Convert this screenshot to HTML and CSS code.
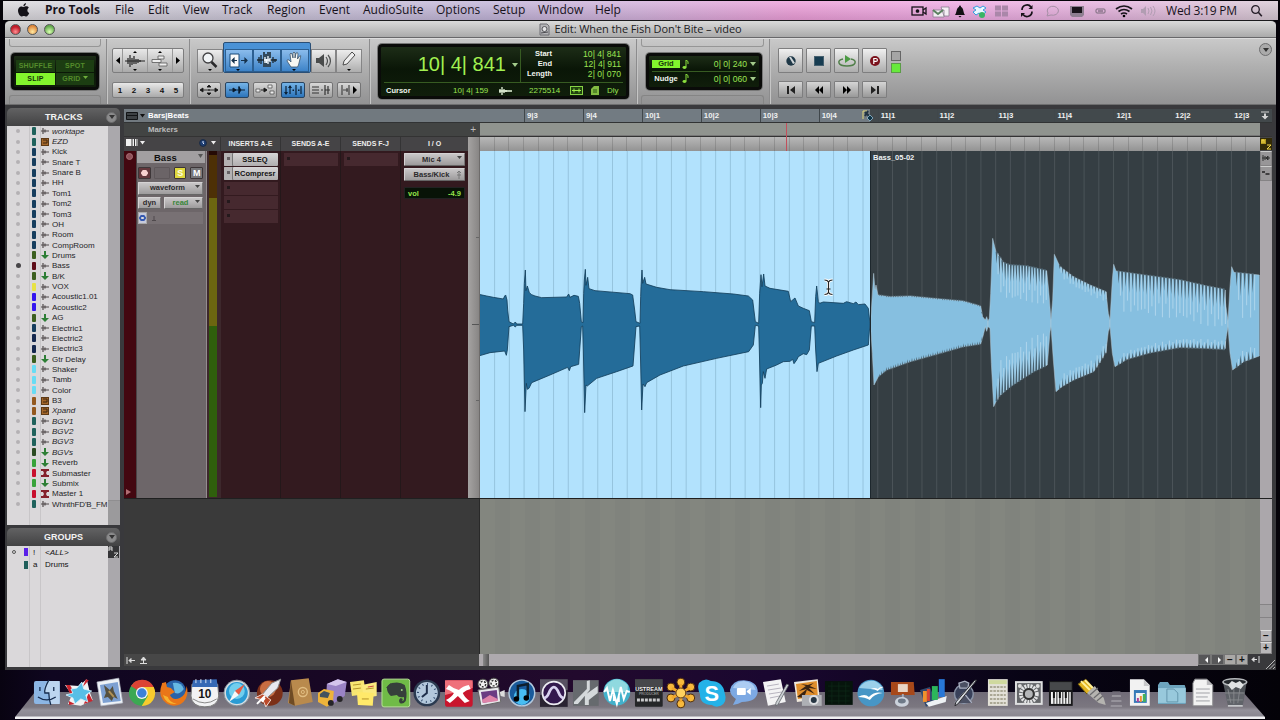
FILE: index.html
```html
<!DOCTYPE html>
<html lang="en">
<head>
<meta charset="utf-8">
<title>Edit: When the Fish Don't Bite – video</title>
<link rel="stylesheet" href="styles.css">
</head>
<body>
<header class="menubar">
  <nav class="menus">
    <span class="apple"><svg width="13" height="14" viewBox="0 0 13 14"><path d="M9 0C9 2 7.8 3.2 6.4 3.2 6.3 1.6 7.6.3 9 0zM6.500 4C7.500 4 8.200 3.300 9.300 3.300c1 0 2 .5 2.500 1.400C9.800 6 10 9 12.200 9.900 11.700 11.500 10.400 13.400 9.200 13.400 8.300 13.400 7.900 12.900 6.800 12.900S5.300 13.400 4.500 13.400C2.800 13.400 1 10.200 1 7.600 1 5 2.600 3.400 4.300 3.400 5.200 3.400 5.900 4 6.500 4z" fill="#141218"/></svg></span>
    <b>Pro Tools</b><span>File</span><span>Edit</span><span>View</span><span>Track</span><span>Region</span><span>Event</span><span>AudioSuite</span><span>Options</span><span>Setup</span><span>Window</span><span>Help</span>
  </nav>
  <div class="tray">
    <svg width="268" height="18" viewBox="0 0 268 18">
      <g fill="none" stroke="#17121a" stroke-width="1.3"><rect x="1" y="5" width="11" height="8"/><path d="M12 8l3-2v6l-3-2"/><circle cx="6.500" cy="9" r="1.200" fill="#17121a"/></g>
      <path d="M22 8h11v7H22zM30 5h8v9h-5z" fill="#f4eef4" stroke="#8b7d90" stroke-width=".8"/><path d="M22 8l5 4 5-4" fill="none" stroke="#5c8260" stroke-width="2"/>
      <path d="M44 13c2-2 1-7 4-8 0-2 2-2 2 0 3 1 2 6 4 8zM47.500 14h3l-1.500 1.500z" fill="#121014"/>
      <path d="M62 6l4-2 3 2 3-2 3 2-3 2 3 2-4 3-3-2-3 2-3-3 3-2z" fill="#eaf8ff" stroke="#359dde"/><circle cx="71" cy="13" r="3" fill="#37b464"/>
      <path d="M84 3.500h6v5h-6zM91 3.500h6v5h-6zM84 9.500h6v5h-6zM91 9.500h6v5h-6z" fill="#aa87a9"/>
      <path d="M111 8a5 5 0 0 1 9-3M121 9.500a5 5 0 0 1-9 3" fill="none" stroke="#171219" stroke-width="1.700"/><path d="M121.500 3v4h-4zM110 15v-4h4z" fill="#171219"/>
      <path d="M136 14l1-3a5.600 4.500 0 1 1 3 2z" fill="none" stroke="#a68fa6"/>
      <path d="M159 4h14v9l-2 2h-10l-2-2z" fill="#8e7f91"/><rect x="161" y="5" width="10" height="6" fill="#19141b"/>
      <rect x="185" y="7" width="9" height="4" rx="1" fill="none" stroke="#796b7b"/><path d="M187 9h5" stroke="#635566"/>
      <g fill="none" stroke="#19141b" stroke-width="1.700"><path d="M205 7q8-6 16 0M207.500 9.500q5.500-4 11 0M210 12q3-2 6 0"/></g><circle cx="213" cy="14" r="1.300"/>
      <path d="M230 7h2l3-3v10l-3-3h-2z" fill="#b19db2"/><path d="M237 6q2 3 0 6M239.500 5q3 4 0 8M242 4q4 5 0 10" fill="none" stroke="#b19db2"/>
    </svg>
    <span class="time">Wed 3:19 PM</span>
    <svg width="13" height="14" viewBox="0 0 13 14"><circle cx="5.500" cy="5.500" r="3.800" fill="none" stroke="#241d27" stroke-width="1.300"/><path d="M8.300 8.300l3.500 4" stroke="#241d27" stroke-width="1.600"/></svg>
  </div>
</header>

<main class="window">
  <div class="titlebar">
    <div class="lights"><i class="red"></i><i class="amber"></i><i class="green"></i></div>
    <svg width="11" height="13" viewBox="0 0 11 13"><path d="M1 1h7l2 2v9H1z" fill="#b5b5b8" stroke="#6d6d72"/><circle cx="5.500" cy="6" r="2.500" fill="#e4e4e6" stroke="#55555a"/><path d="M2 10l7-1" stroke="#4a4a50"/></svg>
    <span>Edit: When the Fish Don't Bite – video</span>
  </div>

  <div class="toolbar">
    <section class="modes">
      <div class="lcd modegrid"><span>SHUFFLE</span><span>SPOT</span><span class="lit">SLIP</span><span>GRID&nbsp;<svg width="5" height="3"><path d="M0 0h5L2.500 3z" fill="#6fae3c"/></svg></span></div>
    </section>
    <section class="zoomers">
      <div class="strip big">
        <i class="w10"><svg width="6" height="7"><path d="M5 0v7L1 3.500z"/></svg></i>
        <i class="w26"><svg width="22" height="20" viewBox="0 0 22 20"><path d="M1 10h20M4 7v6M6 4v12M8 7v7M10 5v8M12 8v5M14 8v4M16 9v2" stroke="#222" stroke-width="1.200"/><path d="M9 2l2-2 2 2zM9 18l2 2 2-2z"/></svg></i>
        <i class="w26"><svg width="20" height="20" viewBox="0 0 20 20"><path d="M8 5h6v3H8zM2 8.500h9v3H2zM9 12h8v3H9z" fill="#eee" stroke="#666" stroke-width=".9"/><path d="M8 2l2-2 2 2zM8 18l2 2 2-2z"/></svg></i>
        <i class="w10"><svg width="6" height="7"><path d="M1 0v7L5 3.500z"/></svg></i>
      </div>
      <div class="strip small nums"><i>1</i><i>2</i><i>3</i><i>4</i><i>5</i></div>
    </section>
    <section class="tools">
      <div class="toolrow">
        <i><svg width="22" height="22" viewBox="0 0 22 22"><circle cx="9" cy="8" r="5" fill="#f1f4f6" stroke="#424244" stroke-width="1.300"/><path d="M12.500 12l5 5" stroke="#29292b" stroke-width="2.500"/><path d="M9 19h4l-2 2z"/></svg></i>
        <div class="smart">
          <i><svg width="24" height="22" viewBox="0 0 24 22"><path d="M3 4h9v13H3z" fill="#fafafa" stroke="#184976"/><path d="M5 10.500h5M5 10.500l2-2v4zM14 10.500h6M20 10.500l-2-2v4z" stroke="#15314c" fill="#15314c" stroke-width="1.200"/><path d="M9 19h4l-2 2z"/></svg></i>
          <i><svg width="24" height="22" viewBox="0 0 24 22"><path d="M8 2h2v2h2V2h4v15H8z" fill="#34495a"/><path d="M2 10h20M4 7v6M6 5v9M18 7v6M20 9v3" stroke="#1b2730" stroke-width="1.300"/><path d="M9 10h6M10 7v6M11.500 9v4M13 6v8M15 8v4" stroke="#f4faff" stroke-width="1.300"/></svg></i>
          <i><svg width="22" height="22" viewBox="0 0 22 22"><path d="M7 17L3 11q0-2 2-1l2 2-1-8q1-2 2 0l1 4V3q1-2 2 0v5l1-5q2-1 2 1l-.5 5 2-3q2-1 1 1l-2 8-1 2z" fill="#f6f6f2" stroke="#3b536a" stroke-width=".8"/><path d="M8 19h4l-2 2z"/></svg></i>
        </div>
        <i><svg width="20" height="20" viewBox="0 0 20 20"><path d="M2 7h3l5-4v13l-5-4H2z" fill="#4a4c4c"/><path d="M12 6q3 4 0 8M14 4q5 6 0 12" stroke="#505252" fill="none" stroke-width="1.200"/></svg></i>
        <i><svg width="20" height="22" viewBox="0 0 20 22"><path d="M4 15l1-4 8-9 3 3-8 9z" fill="#eee" stroke="#4c4c4c"/><path d="M8 19h4l-2 2z"/></svg></i>
      </div>
      <div class="editrow">
        <i><svg width="20" height="12" viewBox="0 0 20 12"><path d="M1 6h18M1 6l3-2v4zM19 6l-3-2v4z" stroke="#222" stroke-width=".9"/><path d="M10 1l2 2H8zM10 11l2-2H8zM9 6h2" stroke="#222"/></svg></i>
        <i class="on"><svg width="20" height="12" viewBox="0 0 20 12"><path d="M2 6h16M9 6L6 4v4zM14 6l-2-3v6zM12 2v8" stroke="#0b2036"/></svg></i>
        <i><svg width="20" height="12" viewBox="0 0 20 12"><path d="M1 5h4v3H1zM13 1h4v3h-4zM15 7h4v3h-4z" fill="#eee" stroke="#555" stroke-width=".8"/><path d="M6 6h6M12 6L9 4v4z" stroke="#222"/></svg></i>
        <i class="on"><svg width="20" height="12" viewBox="0 0 20 12"><path d="M3 2v8M7 2v8M13 1v10M18 2v8" stroke="#0b2036" stroke-width="1.200"/><path d="M1 8h4l-2 3zM5 4h4L7 1zM9.500 5.500h1.500v1.500H9.500zM15 5.500h1.500v1.500H15z" fill="#0b2036"/></svg></i>
        <i><svg width="20" height="12" viewBox="0 0 20 12"><path d="M1 3h7M1 6h7M1 9h7M10 6h2M14 1v10M17 2v8M14 6h5" stroke="#333" stroke-width="1.200"/></svg></i>
        <i><svg width="20" height="12" viewBox="0 0 20 12"><path d="M3 1v10M10 1v10M4 6h5M8 4v4" stroke="#444" stroke-width="1.200"/><path d="M14 2v8l4-4z"/></svg></i>
      </div>
    </section>
    <section class="counterbox">
      <div class="lcd counter">
        <div class="upper">
          <div class="main">10| 4| 841<svg width="6" height="4"><path d="M0 0h6L3 4z" fill="#a3cb8b"/></svg></div>
          <dl><dt>Start</dt><dd>10| 4| 841</dd><dt>End</dt><dd>12| 4| 911</dd><dt>Length</dt><dd>2| 0| 070</dd></dl>
        </div>
        <div class="lower"><b>Cursor</b><span class="pos">10| 4| 159</span><svg width="14" height="10" viewBox="0 0 14 10"><path d="M1 5h13M2 3v4M4 1v8M6 3v4M8 4v2" stroke="#e6f5dc" stroke-width="1.300"/></svg><span class="samples">2275514</span><svg class="cell" width="13" height="9" viewBox="0 0 13 9"><rect x=".5" y=".5" width="12" height="8" fill="#21430f" stroke="#86d345"/><path d="M2 4.500h9M4 2.500v4M9 2.500v4" stroke="#a0f04f"/></svg><svg width="8" height="9" viewBox="0 0 8 9"><path d="M3 0h5v9H0V3z" fill="#82bb42"/><path d="M2 4h4M2 6h4" stroke="#2a5512"/></svg><span>Dly</span></div>
      </div>
    </section>
    <section class="gridbox">
      <div class="lcd gridnudge">
        <div><b class="lit">Grid</b><svg width="8" height="9" viewBox="0 0 8 9"><path d="M4 0v7M4 0q3 1 2 4" stroke="#8be03e" fill="none"/><ellipse cx="2.500" cy="7.500" rx="2" ry="1.400" fill="#8be03e"/></svg><span>0| 0| 240</span><svg width="6" height="4"><path d="M0 0h6L3 4z" fill="#a3cb8b"/></svg></div>
        <div><b>Nudge</b><svg width="8" height="9" viewBox="0 0 8 9"><path d="M4 0v7M4 0q3 1 2 4" stroke="#8be03e" fill="none"/><ellipse cx="2.500" cy="7.500" rx="2" ry="1.400" fill="#8be03e"/></svg><span>0| 0| 060</span><svg width="6" height="4"><path d="M0 0h6L3 4z" fill="#a3cb8b"/></svg></div>
      </div>
    </section>
    <section class="transport">
      <div class="play">
        <i><svg width="12" height="12" viewBox="0 0 12 12"><circle cx="6" cy="6" r="4.700" fill="#1f3847"/><path d="M4 2l4 7 2-1-4-6z" fill="#d0d6d9"/></svg></i>
        <i><svg width="10" height="10"><rect x=".5" y=".5" width="9" height="9" fill="#173c51" stroke="#46606f"/></svg></i>
        <i><svg width="20" height="16" viewBox="0 0 20 16"><path d="M6 6Q1 7 2 10t8 3 8-3-4-4" fill="none" stroke="#517f4a" stroke-width="1.500"/><path d="M8 2v8l6-4z" fill="#4b9a43"/></svg></i>
        <i><svg width="12" height="12" viewBox="0 0 12 12"><circle cx="6" cy="6" r="5" fill="#7b121c"/><path d="M4.800 9V3.500h2q1.600 0 1.600 1.400T6.800 6.400h-2" fill="none" stroke="#fff" stroke-width="1.200"/></svg></i>
        <div class="leds"><b></b><b class="go"></b></div>
      </div>
      <div class="seek">
        <i><svg width="10" height="8"><path d="M1 0h2v8H1zM9 0v8L4 4z" fill="#222"/></svg></i>
        <i><svg width="10" height="8"><path d="M5 0v8L1 4zM9 0v8L5 4z"/></svg></i>
        <i><svg width="10" height="8"><path d="M1 0v8l4-4zM5 0v8l4-4z"/></svg></i>
        <i><svg width="10" height="8"><path d="M7 0h2v8H7zM1 0v8l5-4z" fill="#222"/></svg></i>
      </div>
    </section>
    <span class="round toolbar-menu"></span>
  </div>

  <div class="workspace">
    <aside class="lists">
      <h2>TRACKS<span class="round"></span></h2>
      <div class="listbody tracks"><div class="rows" id="tracks"></div><div class="vscroll"><i></i></div></div>
      <h2 class="second">GROUPS<span class="round"></span></h2>
      <div class="listbody groups">
        <div class="rows">
          <div class="grow"><u></u><s class="violet"></s><span>!</span><em>&lt;ALL&gt;</em></div>
          <div class="grow"><u class="none"></u><s class="teal"></s><span>a</span><span>Drums</span></div>
        </div>
        <div class="vscroll"><svg width="11" height="12" viewBox="0 0 11 12"><rect width="11" height="12" fill="#343436"/><path d="M1 5V1h3v4M1 3h3M6 7h4L6 11h4" stroke="#d8d8d8" fill="none"/></svg></div>
      </div>
    </aside>

    <div class="edit">
      <div class="ruler">
        <div class="ruler-name"><svg width="20" height="8" viewBox="0 0 20 8"><path d="M.5.5h11v7H.5zM1 3.500h10" fill="#3d4144" stroke="#121416"/><path d="M14 2h5l-2.500 3.500z" fill="#111"/></svg><b>Bars|Beats</b></div>
        <div class="beats" id="beats"></div>
        <svg class="selend" width="11" height="12" viewBox="0 0 11 12"><path d="M1 10V2h4" fill="none" stroke="#e1d77a"/><path d="M3 3l5 5M6 2l-3 5" stroke="#203241" stroke-width="2"/><path d="M8 6l3 3-3 3-3-3z" fill="#0e3447" stroke="#a4cde4" stroke-width=".7"/></svg>
        <svg class="rulermenu" width="8" height="9" viewBox="0 0 8 9"><path d="M0 1h8" stroke="#d4d4d4"/><path d="M3 2.500h2V5h2.500L4 8.500.5 5H3z" fill="#d4d4d4"/></svg>
      </div>
      <div class="markers"><div class="marker-name"><b>Markers</b><span>+</span></div><div class="marker-lane"></div></div>
      <div class="heads">
        <div class="h-main"><svg width="20" height="8" viewBox="0 0 20 8"><path d="M0 0h12v7H0z" fill="#f1f1f1"/><path d="M6 0v7M8.500 0v7M11 0v7" stroke="#333"/><path d="M14 2h5l-2.500 3.500z" fill="#eee"/></svg><svg width="17" height="8" viewBox="0 0 17 8"><circle cx="4" cy="4" r="3.400" fill="#1d3e72" stroke="#1a2941"/><path d="M4 2v2l1 1" stroke="#dfe8ff" fill="none"/><path d="M12 2h5l-2.500 3.500z" fill="#eee"/></svg></div>
        <b>INSERTS A-E</b><b>SENDS A-E</b><b>SENDS F-J</b><b class="io">I / O</b><div class="edge"></div><div class="lane"></div>
        <svg class="az" width="12" height="12" viewBox="0 0 12 12"><rect width="12" height="12" fill="#332b08"/><path d="M1 1h5v5H1z" fill="#b39a1f"/><path d="M7 7h4l-4 4h4M2 5V2h2v3" stroke="#f4d94b" fill="none"/></svg>
      </div>
      <div class="track">
        <div class="stripe"><i></i><svg width="5" height="6"><path d="M0 0v6l5-3z" fill="#b06c72"/></svg></div>
        <div class="control">
          <div class="name">Bass<svg width="5" height="4"><path d="M0 0h5L2.500 4z" fill="#555"/></svg></div>
          <div class="rsm"><i class="rec"></i><i class="blank"></i><i class="solo">S</i><i class="mute">M</i></div>
          <div class="btn wf">waveform<svg width="5" height="3"><path d="M0 0h5L2.500 3z" fill="#444"/></svg></div>
          <div class="auto"><span class="btn">dyn</span><span class="btn read">read<svg width="5" height="3"><path d="M0 0h5L2.500 3z" fill="#444"/></svg></span></div>
          <div class="base"><i></i><svg width="6" height="7"><path d="M3 1v4M1 5.500h4" stroke="#4f494c"/></svg></div>
        </div>
        <div class="meter"><i></i></div>
        <div class="slot">
          <span class="plug">SSLEQ</span><span class="plug">RCompresr</span><span class="empty"></span><span class="empty"></span><span class="empty"></span>
        </div>
        <div class="slot"><span class="empty"></span></div>
        <div class="slot"><span class="empty"></span></div>
        <div class="slot iocol"><span class="btn">Mic 4<svg width="5" height="3"><path d="M0 0h5L2.500 3z" fill="#444"/></svg></span><span class="btn out">Bass/Kick<svg width="6" height="8" viewBox="0 0 6 8"><path d="M3 0v8M1 2l2-2 2 2M1 4h4" stroke="#777" fill="none"/></svg></span><span class="vol"><b>vol</b><b>-4.9</b></span></div>
        <div class="edge ticks"></div>
        <svg class="wave" width="780" height="347" viewBox="480 151 780 347" id="wave">
          <rect x="480" y="151" width="390" height="347" fill="#b2e2fd"/>
          <rect x="870" y="151" width="390" height="347" fill="#353e43"/>
          <g id="gridlines"></g>
          <path transform="translate(470 250) scale(.33333)" fill="#246c99" stroke="#123d5a" stroke-width="2.500" d="M26 133L50 138 70 142 100 147 104 138 107 135 111 150 113 180 117 215 130 222 136 216 140 222 158 222 161 160 163 100 166 60 168 122 172 108 178 128 185 134 195 138 215 143 290 141 296 132 300 142 312 136 325 139 329 160 334 215 339 218 341 130 343 90 346 58 348 106 353 82 357 116 375 122 480 131 488 135 494 180 498 215 510 220 512 140 513 110 516 60 518 100 524 82 528 102 560 112 600 119 700 125 790 132 835 138 848 150 856 215 866 220 869 130 873 74 876 110 881 72 885 108 900 115 955 124 962 155 975 144 985 168 1000 175 1018 182 1024 215 1034 218 1037 140 1040 108 1045 155 1049 160 1060 156 1120 160 1130 155 1150 161 1158 156 1165 164 1185 162 1195 175 1200 220 1195 285 1150 300 1100 318 1045 340 1041 365 1037 300 1034 228 1024 228 1018 300 1010 314 1000 311 985 320 980 330 972 341 968 328 960 334 940 335 920 345 890 357 885 385 880 365 877 400 874 405 872 473 868 300 866 228 856 226 850 285 836 305 740 325 640 348 570 375 530 398 525 410 519 402 515 480 511 300 509 228 498 230 489 348 440 365 380 385 352 408 348 405 344 488 340 300 338 228 334 230 326 343 302 350 298 362 293 352 240 375 185 398 177 415 172 418 169 400 165 485 161 300 158 226 140 226 136 231 130 226 117 230 112 300 109 316 104 303 60 308 26 318z"/>
          <g transform="translate(860 220) scale(.33333)" id="bright"></g>
          <text x="873" y="160" class="clipname">Bass_05-02</text>
          <path d="M870.500 151v347" stroke="#1d272d"/>
          <path d="M824.500 280q3 0 4 2 1-2 4-2M828.500 282v10M824.500 294.500q3 0 4-2 1 2 4 2" fill="none" stroke="#fff" stroke-width="3"/>
          <path d="M824.500 280q3 0 4 2 1-2 4-2M828.500 282v10M824.500 294.500q3 0 4-2 1 2 4 2M826.500 289h4" fill="none" stroke="#222" stroke-width="1.200"/>
        </svg>
        <div class="trackscroll"><i><svg width="10" height="10" viewBox="0 0 10 10"><path d="M1 5h8M2 2v6M4 3v4M7 3l-2 2 2 2z" stroke="#333" fill="#333"/></svg></i><i><svg width="10" height="10" viewBox="0 0 10 10"><path d="M1 4h3M4.500 6h4" stroke="#222" stroke-width="1.500"/></svg></i></div>
      </div>
      <div class="void"><div class="void-left"></div><div class="void-right"></div><div class="vz"><i></i><i></i><b>−</b><b>+</b></div></div>
      <div class="bottom">
        <div class="b-left"><svg width="22" height="9" viewBox="0 0 22 9"><path d="M1 1v7M3 4.500h6M3 4.500l2-2v4zM14 7.500h7M17.500 7V2M17.500 1l-2.500 3h5z" stroke="#ddd" fill="#ddd"/></svg></div>
        <div class="b-scroll"><i></i></div>
        <div class="zoombtns"><i class="dk"><svg width="5" height="6"><path d="M4 0v6L1 3z" fill="#fff"/></svg></i><i class="dk"><svg width="5" height="6"><path d="M1 0v6l3-3z" fill="#fff"/></svg></i><i>−</i><i>+</i><svg width="9" height="9" viewBox="0 0 9 9"><path d="M8 1v7M1 4.500h5M1 4.500l2-2v4z" stroke="#ddd" fill="#ddd"/></svg></div>
      </div>
      <div class="playhead"></div>
    </div>
  </div>
  <svg class="grip" width="9" height="9"><path d="M0 9L9 0M3.500 9L9 3.500M7 9l2-2" stroke="#bbb"/></svg>
</main>

<footer class="dock">
  <div class="shelf"></div>
  <div class="icons">
    <svg viewBox="0 0 32 32"><rect x="3" y="4" width="26" height="23" rx="2" fill="#8cb6e5"/><path d="M17 4q-6 8-3 12h4q0 6 2 11h9V4z" fill="#bdd6f0"/><path d="M18 3q-5 9-4 13h4q0 6 2 12M9 10v4M23 10v4M7 20q9 6 18 0" fill="none" stroke="#142b4e" stroke-width="1.300"/></svg>
    <svg viewBox="0 0 32 32"><path d="M2 8l14 1L24 2l3 13 3 8-12 6L5 27l4-9z" fill="#f3f3f3"/><path d="M3 8l4 0 3 5-1 8zM23 2l3 1-6 7zM26 16l4 8-9 3zM6 24l6 3-6 1z" fill="#c9242d"/><path d="M8 12l6-1 5-6 2 7 8 2-6 4 2 7-7-3-6 5-2-6-7-3 7-2z" fill="#58bfe6" stroke="#dff6ff" stroke-width=".8"/></svg>
    <svg viewBox="0 0 32 32"><path d="M3 5l22-4 4 25L7 29z" fill="#eef2f7" stroke="#b6bcc8" stroke-width=".7"/><path d="M6 8l18-3 3 19L9 26z" fill="#7da0d2"/><path d="M10 8l6 5 3-4 1 5 4 8-4-2-2 4-4-4-4 1 2-5z" fill="#56503f"/><path d="M15 14l5 6" stroke="#b19255" stroke-width="2"/></svg>
    <svg viewBox="0 0 32 32"><circle cx="16" cy="16" r="13" fill="#3ca853"/><path d="M16 16L5 9A13 13 0 0 1 28 10z" fill="#dc4335"/><path d="M16 10h12a13 13 0 0 1-12 19l6-10z" fill="#f8cb2e"/><circle cx="16" cy="16" r="6" fill="#f4f4f4"/><circle cx="16" cy="16" r="4.800" fill="#3c80d8"/></svg>
    <svg viewBox="0 0 32 32"><circle cx="17" cy="14" r="11" fill="#2963a8"/><path d="M15 6q8-2 11 6-4 6-9 4z" fill="#66b9e3"/><path d="M4 7q-4 10 1 16 8 9 18 4 9-6 6-18-1 10-7 12-7 3-10-3l5-3-4-4-4-1-1-5q-3 1-4 1z" fill="#e97618"/><path d="M5 18q3 10 14 9-8-2-9-7z" fill="#f6b32e"/></svg>
    <svg viewBox="0 0 32 32"><path d="M3 7h26l1 12q-1 11-14 11T2 19z" fill="#f2f2f4" stroke="#777"/><path d="M4 3l24-1 1 8H3z" fill="#3669b5"/><path d="M7 2v4M12 2v4M17 2v4M22 2v4" stroke="#d8e4f5"/><text x="16" y="21" text-anchor="middle" class="cal">10</text><path d="M4 22q12 8 24 0" stroke="#888" fill="none"/></svg>
    <svg viewBox="0 0 32 32"><circle cx="16" cy="16" r="13" fill="#d8dfe4" stroke="#82909a"/><circle cx="16" cy="16" r="11" fill="#2a9bd4"/><circle cx="16" cy="14" r="8" fill="#71cfee"/><path d="M24 7l-6 11-4-4z" fill="#e65a42"/><path d="M8 25l6-11 4 4z" fill="#f8f8f8"/></svg>
    <svg viewBox="0 0 32 32"><circle cx="17" cy="16" r="13" fill="#7c3018"/><circle cx="15" cy="12" r="8" fill="#c96d42"/><path d="M28 2l-3 9-12 11-4-4L19 6z" fill="#e8e8ee" stroke="#888"/><path d="M10 17l-8 4 8 2 3 7 5-7z" fill="#bc4a2a" stroke="#f1dfd9"/><path d="M4 27l8-8M9 25l3-4" stroke="#fff" stroke-width="2"/></svg>
    <svg viewBox="0 0 32 32"><path d="M6 3l18-2 4 24-18 4-7-3z" fill="#b98a4d"/><path d="M6 3l4 26-6-3z" fill="#6f4b24"/><circle cx="18" cy="15" r="4.500" fill="none" stroke="#e1bd82" stroke-width="1.400"/><circle cx="18" cy="15" r="1.600" fill="none" stroke="#e1bd82"/></svg>
    <svg viewBox="0 0 32 32"><path d="M11 7l11-5 9 3-2 14-12 8-7-6z" fill="#9a83c5"/><path d="M11 7l11-5 9 3-11 4z" fill="#d4c5ec"/><path d="M2 16l6-4 10 2-1 12-6 4-9-5z" fill="#eeb33a"/><path d="M4 17l4-3 6 2-2 5-8-1z" fill="#44525e"/><circle cx="15" cy="26" r="3" fill="#262428"/><circle cx="24" cy="22" r="3" fill="#262428"/></svg>
    <svg viewBox="0 0 32 32"><path d="M2 5l14-2 2 14-14 2z" fill="#f7e672"/><path d="M14 8l15-3v14l-13 2z" fill="#fbea7f"/><path d="M9 15l17 1-1 13-15-1z" fill="#ffe96a"/><path d="M5 8l8-1M5 12l8-1M18 12l8-1M14 22h7" stroke="#b39328"/><path d="M20 10l6-1" stroke="#c8443e"/></svg>
    <svg viewBox="0 0 32 32"><rect x="2" y="2" width="28" height="28" rx="2" fill="#70bb47" stroke="#b7e496"/><path d="M12 6q8-2 13 2 3 8 1 16-3 4-6 2-2-3 1-5l2 1q-1 2 0 2 2-1 1-4-5 1-7-2l-6 1q-4-3-4-8 0-3 5-5z" fill="#36403b"/><path d="M6 11l5-5v5z" fill="#36403b"/><circle cx="22" cy="13" r="1" fill="#a3d587"/></svg>
    <svg viewBox="0 0 32 32"><circle cx="16" cy="16" r="13.500" fill="#2b3a50"/><circle cx="16" cy="16" r="11" fill="#b3c8dc"/><path d="M16 8v8l-5 4" fill="none" stroke="#1e2f4b" stroke-width="2"/><circle cx="16" cy="16" r="9" fill="none" stroke="#334c6f" stroke-width="2" stroke-dasharray="1 3.700"/></svg>
    <svg viewBox="0 0 32 32"><rect x="2" y="3" width="28" height="27" rx="3" fill="#c9152d"/><path d="M2 3h28v8L2 18z" fill="#ef707b"/><path d="M6 8q5 4 10 5 4-4 10-5l2 4q-5 1-8 4 2 5 7 8l-5 2q-4-4-7-7-4 4-8 7l-4-3q6-3 8-7-4-3-8-4z" fill="#fff"/></svg>
    <svg viewBox="0 0 32 32"><circle cx="8" cy="7" r="5" fill="#f2f2f2" stroke="#444"/><circle cx="19" cy="6" r="5" fill="#f2f2f2" stroke="#444"/><circle cx="8" cy="7" r="2.800" fill="none" stroke="#333" stroke-width="1.500" stroke-dasharray="2 1.500"/><circle cx="19" cy="6" r="2.800" fill="none" stroke="#333" stroke-width="1.500" stroke-dasharray="2 1.500"/><path d="M3 13l21-3 2 15-20 4z" fill="#e8e8ec" stroke="#666"/><path d="M6 15l16-2 1 10-15 3z" fill="#6b3c83"/><path d="M7 23l8-5 8 4v2L8 26z" fill="#df84aa"/><path d="M25 15l5-2v7l-4-1z" fill="#ddd"/></svg>
    <svg viewBox="0 0 32 32"><circle cx="16" cy="16" r="13" fill="#185a9b" stroke="#b2c9de" stroke-width="1.500"/><circle cx="16" cy="20" r="8" fill="#48bdf1"/><path d="M12 22V9l10-2v14" fill="none" stroke="#0e1e2c" stroke-width="2.500"/><circle cx="10.500" cy="22" r="2.800"/><circle cx="20.500" cy="21" r="2.800"/></svg>
    <svg viewBox="0 0 32 32"><rect x="2" y="2" width="28" height="28" fill="#292331"/><path d="M2 2h28v11L2 18z" fill="#585262"/><circle cx="16" cy="16" r="11.500" fill="#32184d" stroke="#ececf2" stroke-width="1.700"/><path d="M6 21q3 0 5-5 5-12 10 0 2 5 5 5" fill="none" stroke="#d9d2f0" stroke-width="2.800"/></svg>
    <svg viewBox="0 0 32 32"><rect x="3" y="3" width="26" height="26" fill="#666a6e"/><path d="M4 25L17 12V4l3-1v10L8 27H4zM15 28V18L28 9v7l-9 7v5z" fill="#d4d9db"/></svg>
    <svg viewBox="0 0 32 32"><circle cx="16" cy="15" r="13.500" fill="#42b1cb"/><path d="M5 8q11-12 22 0v7H3z" fill="#8fd9df"/><path d="M3 15l3-4 3 13 3-11 4 14 4-17 3 12 3-8 3 1M9 19v5M13 18v6M18 18v7" fill="none" stroke="#fff" stroke-width="2"/></svg>
    <svg viewBox="0 0 32 32"><rect x="2" y="2" width="28" height="28" rx="1" fill="#252628"/><path d="M2 2h28v8H2z" fill="#46474b"/><text x="16" y="14" text-anchor="middle" class="us">USTREAM</text><text x="16" y="18" text-anchor="middle" class="us2">PRODUCER</text><path d="M4 23h24" stroke="#c9c9cb" stroke-width="3" stroke-dasharray="3 1"/></svg>
    <svg viewBox="0 0 32 32"><g fill="#f7b93d" stroke="#4c2c0d"><circle cx="16" cy="5" r="4"/><circle cx="26" cy="10" r="4"/><circle cx="26" cy="21" r="4"/><circle cx="16" cy="27" r="4"/><circle cx="6" cy="21" r="4"/><circle cx="6" cy="10" r="4"/></g><path d="M16 7v18M7 11l18 10M7 21l18-10" stroke="#f1a72c" stroke-width="3"/><circle cx="16" cy="16" r="5" fill="#ffd15f" stroke="#633b12"/></svg>
    <svg viewBox="0 0 32 32"><path d="M3 6q6-6 12-2 12 0 14 12 3 9-4 13-5 2-9-1Q4 28 4 17 1 11 3 6z" fill="#24b2e8"/><text x="16" y="24" text-anchor="middle" class="skype">S</text></svg>
    <svg viewBox="0 0 32 32"><path d="M5 28l3-6Q2 18 2 13 4 3 16 3q14 1 14 12-1 10-16 10-3 2-9 3z" fill="#7da9e3"/><path d="M5 11Q8 4 16 4q10 1 12 9z" fill="#acccf3"/><rect x="9" y="11" width="9" height="7" rx="1" fill="#fff"/><path d="M19 14l4-3v7l-4-3z" fill="#fff"/></svg>
    <svg viewBox="0 0 32 32"><path d="M3 5l18-3 5 23-18 4z" fill="#f3f3f4"/><path d="M7 9l12-2M8 13l13-2M9 17l13-2M10 21l10-2" stroke="#b6b3be"/><path d="M29 8L18 28l-2 1 0-3L27 7z" fill="#ccd0d4" stroke="#5f6469" stroke-width=".8"/></svg>
    <svg viewBox="0 0 32 32"><path d="M2 5l24-3 2 20-23 3z" fill="#f0e9dc"/><path d="M4 7l21-3 1 15-20 3z" fill="#df8e2d"/><path d="M5 20l10-8-8 2 7-5-5-2 7 1 6-2-4 3 7 3-8-1 6 6-8-4-3 8z" fill="#392312"/><path d="M10 18h20v11H10z" fill="#aeb0b5"/><circle cx="22" cy="23" r="5" fill="#dedfe2"/><circle cx="22" cy="23" r="3" fill="#263542"/></svg>
    <svg viewBox="0 0 32 32"><rect x="2" y="4" width="28" height="24" fill="#06140c"/><path d="M5 9h22M5 14h22M5 19h22M5 24h22M9 5v22M16 5v22M23 5v22" stroke="#0f2a18" stroke-width=".7"/></svg>
    <svg viewBox="0 0 32 32"><circle cx="16" cy="16" r="13.500" fill="#4796c6"/><path d="M4 11Q10 2 20 4q8 4 8 9z" fill="#9bd0ea"/><path d="M3 20q7-4 11 0 6-6 14-4-9 1-13 7-5-3-12-3zM16 12q4-2 7 0 3-3 6-2-4 1-6 4-3-2-7-2z" fill="#fff"/></svg>
    <svg viewBox="0 0 32 32"><path d="M4 5h23l1 13H4z" fill="#a84819"/><path d="M11 7h10v8H11z" fill="#e9d5c5"/><path d="M16 17v8" stroke="#a5a9b5" stroke-width="2"/><ellipse cx="15" cy="25" rx="7" ry="5" fill="#ccd2dc"/><ellipse cx="15" cy="24" rx="4" ry="2.500" fill="#6e7988"/></svg>
    <svg viewBox="0 0 32 32"><path d="M2 13l10-3 6 15-10 5z" fill="#31486d"/><path d="M8 26l21-7-1 6-17 5z" fill="#edf1f4"/><path d="M5 14h4v11H5z" fill="#f0912d"/><path d="M14 9h6v14h-6z" fill="#2cb65b"/><path d="M21 2h6v18h-6z" fill="#2877d7"/><path d="M9 12h3v12H9z" fill="#d94334"/></svg>
    <svg viewBox="0 0 32 32"><circle cx="14" cy="17" r="9.500" fill="#39415a" stroke="#8993a6" stroke-width="1.500"/><path d="M9 6l6-2 4 2-1 5h-8zM5 26l9-10 8 10" fill="#4b5063" stroke="#aab0c1" stroke-width="1.300"/><path d="M27 3L8 27l-3 2 1-4L25 3z" fill="#d3d7dc" stroke="#2a2b30"/></svg>
    <svg viewBox="0 0 32 32"><rect x="6" y="2" width="20" height="27" fill="#e3e1d8"/><rect x="7" y="3" width="18" height="4" fill="#cfd99e"/><path d="M8 10h16M8 14h16M8 18h16M8 22h16M8 26h16" stroke="#aaa794" stroke-width="2" stroke-dasharray="2.500 1"/></svg>
    <svg viewBox="0 0 32 32"><rect x="2" y="4" width="28" height="24" fill="#dedfe0"/><rect x="4" y="6" width="24" height="20" fill="#646669"/><circle cx="16" cy="17" r="8" fill="none" stroke="#e3e4e5" stroke-width="4" stroke-dasharray="2 1"/><circle cx="16" cy="17" r="5" fill="#b4b6b8" stroke="#333" stroke-width="2"/><circle cx="7" cy="9" r="2" fill="#ddd"/><circle cx="25" cy="9" r="2" fill="#ddd"/></svg>
    <svg viewBox="0 0 32 32"><path d="M4 4h24v25H4z" fill="#19191b"/><path d="M5 5h22v8H5z" fill="#47494b"/><path d="M6 15h20v12H6z" fill="#f4f4f4"/><path d="M9 15v12M12 15v12M15 15v12M18 15v12M21 15v12M24 15v12" stroke="#222"/><path d="M9 15v6M15 15v6M21 15v6" stroke="#111" stroke-width="2"/></svg>
    <svg viewBox="0 0 32 32"><path d="M1 7l8-5 8 9-7 6z" fill="#e1b320" stroke="#6b5711"/><path d="M4 4l9 9M8 3l8 8" stroke="#fff19c" stroke-width="2"/><path d="M10 16l8-7 9 12 2 7-7-2z" fill="#b5b4b0"/><path d="M13 18l8-7M17 21l7-6M20 24l6-5" stroke="#6b6b6d" stroke-width="1.300"/></svg>
    <div class="sep"></div>
    <svg viewBox="0 0 32 32"><path d="M6 2h14l6 6v21H6z" fill="#f2f2f2"/><path d="M20 2v7h6" fill="#c8c8ca"/><path d="M10 13h13v13H10z" fill="#367ab8"/><path d="M12 16h9v8h-9z" fill="#f2f2f2"/><path d="M13 21h2v4h-2z" fill="#b23d99"/><path d="M16 19h2v6h-2z" fill="#f19131"/><path d="M19 17h3v8h-3z" fill="#44b35b"/></svg>
    <svg viewBox="0 0 32 32"><path d="M2 8l2-3h8l2 3h15l1 3v16H2z" fill="#6da4bd"/><path d="M2 11h28v15H2z" fill="#98c9dc"/><path d="M11 12h7l4 4v9H11z" fill="none" stroke="#6497ad"/></svg>
    <svg viewBox="0 0 32 32"><path d="M7 2h12l6 6v21H5V6z" fill="#f2f2f2" stroke="#8a8a8d"/><path d="M19 2v6h6" fill="#b9b9bc"/><path d="M8 12h14M8 16h14M8 20h12M8 24h14" stroke="#a1a2a7"/></svg>
    <svg viewBox="0 0 32 32"><path d="M4 5h24l-4 24H9z" fill="#5c6065" opacity=".85"/><ellipse cx="16" cy="5" rx="12" ry="3.500" fill="#262a2e" stroke="#b7babd" stroke-width="1.500"/><path d="M9 8l4-4 4 2 4-2 4 4-3 4-5-2-4 3z" fill="#e0e2e3"/><path d="M9 12l3 14M15 12v15M21 12l-2 14M6 16h20M8 23h16" stroke="#8b8e92" stroke-width=".8"/><path d="M9 29h15" stroke="#d5d6d8" stroke-width="1.500"/></svg>
  </div>
</footer>
<script src="app.js"></script>
</body>
</html>
```

FILE: styles.css
```css
* { box-sizing: border-box; }
body { margin: 0; width: 1280px; height: 720px; overflow: hidden; display: flex; flex-direction: column; background: #050309; font-family: "Liberation Sans", Arial, sans-serif; color: #111; }
i, em { font-style: normal; }
s, u { text-decoration: none; }
svg { flex: none; display: block; }

.menubar { height: 19px; margin: 1px 2px 0 3px; display: flex; justify-content: space-between; background: linear-gradient(rgba(255,255,255,.18), rgba(0,0,0,.12)), linear-gradient(90deg, #dcdade 0, #cfcbd9 14%, #c3b6da 38%, #d4b2dd 50%, #ee9fda 62%, #f0abe4 75%, #e6b5df 87%, #d9cbd6 100%); font: 500 12px/17px "Open Sans", "Noto Sans", sans-serif; color: #17121b; }
.menus { display: grid; grid-template-columns: 42px 70px 33px 35px 39px 45px 52px 44px 73px 57px 45px 57px 40px; white-space: nowrap; }
.apple { padding: 2px 0 0 14px; }
.tray { display: flex; align-items: center; width: 367px; }
.time { width: 82px; margin-left: -13px; white-space: nowrap; letter-spacing: -.2px; }
.tray > svg:last-child { margin-left: 2px; }

.window { position: relative; height: 650px; margin-left: 5px; width: 1271px; background: #39393c; border-radius: 5px 5px 0 0; display: flex; flex-direction: column; overflow: hidden; border-top: 1px solid #1b1b1d; }
.titlebar { height: 17px; position: relative; display: flex; align-items: center; justify-content: center; gap: 4px; background: linear-gradient(#dadada, #aaa); border-bottom: 1px solid #68686a; font: 500 11px/16px "Open Sans", "Noto Sans", sans-serif; color: #1c1c1e; }
.titlebar span { letter-spacing: -.09px; }
.lights { position: absolute; left: 5px; top: 3px; display: flex; gap: 6px; }
.lights i { width: 11px; height: 11px; border-radius: 50%; border: 1px solid #555; }
.lights .red { background: radial-gradient(circle at 50% 75%, #ff9094, #c01d29 60%); }
.lights .amber { background: radial-gradient(circle at 50% 75%, #ffeaa2, #dc863a 70%); }
.lights .green { background: radial-gradient(circle at 50% 75%, #dbffb2, #62ab4c 70%); }

.toolbar { height: 67px; position: relative; display: flex; background: linear-gradient(#c9c9c9, #b1b1b1 40%, #929293); border-top: 1px solid #dcdcdc; border-bottom: 1px solid #6e6e6f; }
.toolbar section { border-right: 1px solid #8c8c8d; box-shadow: 1px 0 #c5c5c5; }
.lcd { background: linear-gradient(#1d2d17, #0a1607 45%, #101e0b); border: 3px solid #0a0b09; border-radius: 4px; color: #9be452; box-shadow: 0 0 0 1px #777; }
.modes { width: 102px; padding: 14px 7px 0 6px; position: relative; }
.modes::before, .gridbox::before { content: ""; position: absolute; left: 4px; right: 5px; top: 0; height: 7px; border: 1px solid #969696; border-top: 0; border-radius: 0 0 3px 3px; }
.modes::after, .gridbox::after { content: ""; position: absolute; left: 4px; right: 5px; bottom: 0; height: 8px; border: 1px solid #858585; border-bottom: 0; border-radius: 3px 3px 0 0; }
.modegrid { height: 37px; display: grid; grid-template: 12px 12px / 39px 38px; padding: 4px 2px; gap: 1px; font: bold 7px/12px "Liberation Sans"; text-align: center; color: #548b2b; }
.modegrid span { background: #1c3d12; letter-spacing: .2px; }
.modegrid .lit, .lcd .lit { background: #83f52d; color: #16330a; }
.modegrid svg { display: inline-block; vertical-align: 2px; }
.zoomers { width: 83px; padding: 9px 5px 0; }
.strip { display: flex; border: 1px solid #7d7d7e; border-radius: 2px; background: linear-gradient(#e8e8e8, #aaa); }
.strip i { display: flex; align-items: center; justify-content: center; border-right: 1px solid #999; }
.strip i:last-child { border: 0; }
.w10 { width: 10px; }
.w26 { width: 25px; }
.big { width: 72px; height: 25px; }
.small { height: 16px; margin-top: 9px; width: 72px; }
.nums i { flex: 1; border: 0; font: bold 8px "Liberation Sans"; }
.tools { width: 180px; padding: 3px 7px 0; }
.toolrow { display: flex; height: 31px; align-items: flex-end; }
.toolrow i { width: 26px; height: 24px; display: flex; align-items: center; justify-content: center; background: linear-gradient(#ededed, #adadad); border: 1px solid #858586; }
.smart { display: flex; padding: 6px 1px 1px; background: #4a92d6; border: 1px solid #2a4f76; border-radius: 2px; width: 88px; height: 31px; }
.smart i { width: 29px; height: 23px; background: linear-gradient(#8bbcec, #3d83c8); border-color: #2c5f91; }
.editrow { display: flex; gap: 4px; margin-top: 9px; }
.editrow i { width: 24px; height: 16px; display: flex; align-items: center; justify-content: center; background: linear-gradient(#d8d8d8, #a0a0a0); border: 1px solid #747475; border-radius: 2px; }
.editrow .on { background: linear-gradient(#75b4e8, #2c74ba); border-color: #28435f; }
.counterbox { width: 267px; padding: 5px 7px 0 8px; }
.counter { height: 55px; padding: 2px 3px; }
.upper { height: 34px; display: flex; border-bottom: 1px solid #375b22; }
.main { width: 137px; display: flex; align-items: center; justify-content: flex-end; gap: 6px; padding-right: 2px; padding-bottom: 2px; font-size: 20px; color: #a2f151; border-right: 1px solid #375b22; white-space: nowrap; }
dl { margin: 0; flex: 1; display: grid; grid-template: repeat(3, 10px) / 31px 1fr; text-align: right; font-size: 8.600px; line-height: 10px; }
dt { font: bold 7.500px/10px "Liberation Sans"; color: #f1f5ee; }
dd { margin: 0; padding-right: 2px; white-space: nowrap; }
.lower { height: 15px; display: flex; align-items: center; font-size: 8px; gap: 8px; padding-left: 2px; }
.lower b { font-size: 7.500px; color: #f1f5ee; width: 59px; }
.lower .pos { width: 37px; white-space: nowrap; }
.lower .samples { width: 33px; margin-left: 9px; }
.gridbox { width: 133px; padding: 14px 7px 0 9px; position: relative; }
.gridnudge { height: 37px; padding: 1px 3px; }
.gridnudge div { height: 14px; display: flex; align-items: center; font-size: 8.600px; }
.gridnudge div + div { border-top: 1px solid #375b22; }
.gridnudge b { width: 28px; height: 8px; font-size: 7.500px; line-height: 8px; color: #f0f4ee; margin-right: 2px; text-align: center; }
.gridnudge span { margin-left: auto; margin-right: 3px; white-space: nowrap; }
.transport { padding: 9px 0 0 8px; border: 0 !important; box-shadow: none !important; }
.play, .seek { display: flex; gap: 3px; }
.play > i, .seek > i { width: 25px; height: 25px; display: flex; align-items: center; justify-content: center; background: linear-gradient(#f0f0f0, #adadad); border: 1px solid #7e7e7f; border-radius: 1px; }
.seek { margin-top: 8px; }
.seek > i { height: 17px; background: linear-gradient(#d5d5d5, #999); }
.leds { padding: 3px 0 0 1px; display: grid; gap: 2px; align-content: start; }
.leds b { width: 10px; height: 10px; border: 1px solid #666; background: #a5a5a5; }
.leds .go { background: #67ea3c; border-color: #5b9c47; }
.round { width: 11px; height: 11px; border-radius: 50%; background: #8b8b8c; border: 1px solid #6d6d6e; display: flex; align-items: center; justify-content: center; }
.round::after { content: ""; border: 3px solid transparent; border-top: 4px solid #333; border-bottom: 0; }
.toolbar-menu { margin: 4px 4px 0 auto; width: 13px; height: 13px; background: #aaa; }

.workspace { height: 561px; margin-top: 1px; display: flex; gap: 4px; padding: 3px 4px 0 2px; }
.lists { width: 113px; margin-top: -1px; }
.lists h2 { margin: 0; height: 18px; border-radius: 5px 5px 0 0; background: linear-gradient(#626263, #424243); color: #f3f3f3; font: bold 9px/17px "Liberation Sans"; display: flex; align-items: center; padding-left: 38px; }
.lists h2 .round { margin-left: auto; margin-right: 3px; }
.lists .second { margin-top: 3px; padding-left: 37px; }
.listbody { display: flex; background: #dad8da; }
.tracks { height: 399px; }
.groups { height: 121px; }
.rows { width: 101px; overflow: hidden; background: linear-gradient(90deg, transparent 22px, #c8c6c8 22px 23px, transparent 23px 33px, #c8c6c8 33px 34px, transparent 34px); }
.tr { height: 10.360px; display: flex; align-items: center; font-size: 8px; white-space: nowrap; color: #252528; }
.tr.it em { font-style: italic; }
.tr u { width: 4px; height: 4px; border-radius: 50%; background: #b4b1b4; margin-left: 9px; flex: none; }
.tr.sel u { background: #474548; width: 5px; height: 5px; margin-right: -1px; }
.tr s { width: 4px; height: 8px; margin-left: 12px; border-radius: 1px; flex: none; }
.tr svg { margin: 0 3px 0 5px; }
.tr:last-child em { letter-spacing: -.12px; }
.vscroll { width: 12px; background: #aaa8ac; }
.tracks .vscroll { display: flex; align-items: flex-end; }
.tracks .vscroll i { height: 25px; width: 12px; border-top: 1px solid #8f8e90; background: #9b9a9c; }
.grow { height: 12.500px; display: flex; align-items: center; font-size: 8px; padding-left: 5px; }
.grow u { width: 4px; height: 4px; border: 1px solid #555; border-radius: 50%; margin-right: 8px; }
.grow u.none { visibility: hidden; }
.grow s { width: 4px; height: 8px; margin-right: 5px; }
.grow span:nth-child(3) { width: 12px; }
.grow em { font-style: italic; }
.violet { background: #5b21e8; }
.teal { background: #1f5e5a; }

.edit { width: 1148px; position: relative; }
.ruler { display: flex; height: 13px; position: relative; background: #42484b; }
.ruler-name { width: 356px; background: #71797f; display: flex; align-items: center; padding-left: 2px; gap: 2px; font-size: 7.800px; color: #fff; }
.beats { width: 780px; padding-left: 44px; display: flex; overflow: hidden; background: linear-gradient(90deg, #727b82 390px, #42494c 390px); }
.beats b { flex: 0 0 58.950px; border-left: 1px solid #40474b; padding-left: 2px; font-size: 7.800px; line-height: 13px; color: #f0f1f1; }
.selend { position: absolute; left: 738px; top: 0; }
.rulermenu { position: absolute; right: 3px; top: 2px; }
.markers { display: flex; height: 14px; border-top: 1px solid #313334; }
.marker-name { width: 356px; display: flex; justify-content: space-between; align-items: center; background: #424443; padding: 0 4px 0 24px; font-size: 7.800px; color: #bdbdbd; }
.marker-name span { font-size: 10px; }
.marker-lane { width: 780px; background: #90948f; border-bottom: 1px solid #777; }
.heads { display: flex; height: 15px; background: #454446; position: relative; border-top: 1px solid #333; }
.h-main { width: 97px; display: flex; align-items: center; justify-content: space-between; padding: 0 4px 2px 2px; border-right: 1px solid #353536; }
.heads b { width: 60px; text-align: center; border-right: 1px solid #343435; font-size: 7px; line-height: 13px; color: #ededed; }
.heads .io { width: 67px; border: 0; }
.edge { width: 12px; background: linear-gradient(90deg, #a5a3a2, #888685); border-right: 1px solid #6e6c6b; }
.ticks { background: linear-gradient(#555, #555) 4px 173px / 8px 1px no-repeat, linear-gradient(#666, #666) 8px 86px / 4px 1px no-repeat, linear-gradient(#666, #666) 8px 249px / 4px 1px no-repeat, linear-gradient(90deg, #a5a3a2, #888685); }
.lane { width: 780px; background: repeating-linear-gradient(90deg, transparent 0 13.740px, rgba(90,90,90,.3) 13.740px 14.740px), linear-gradient(#b8b8b8, #939393); }
.az { position: absolute; right: 0; top: 1px; }
.track { display: flex; height: 348px; background: #331a1f; border-bottom: 1px solid #1f2020; }
.stripe { width: 12px; background: #430710; display: flex; flex-direction: column; justify-content: space-between; padding: 2px 3px 3px 2px; }
.stripe i { width: 7px; height: 7px; border-radius: 50%; background: #8d5058; border: 1px solid #aa6e75; }
.control { width: 71px; background: #6d6669; padding: 0 3px 0 1px; border-right: 1px solid #938c8f; border-left: 1px solid #4a4345; }
.name { margin: 0 -2px 0 -1px; height: 12px; background: #a29fa1; font: bold 9.500px/13px "Liberation Sans"; padding-left: 17px; display: flex; }
.name svg { margin: 3px 2px 0 auto; }
.rsm { display: flex; gap: 3px; margin-top: 4px; }
.rsm i { width: 13px; height: 12px; border: 1px solid #3d3638; font: bold 9px/10px "Liberation Sans"; text-align: center; color: #fff; background: #6b6467; border-radius: 1px; }
.rsm .rec { background: radial-gradient(circle, #f7d1d0 0 3px, #63373c 3.500px); }
.rsm .blank { width: 17px; border-color: #5e575a; margin-right: 1px; }
.rsm .solo { background: #ded73d; color: #fffde6; }
.rsm .mute { margin-left: 1px; background: #77777a; }
.btn { display: block; position: relative; height: 12px; border-radius: 1px; background: linear-gradient(#c9c7c8, #9d9b9c); border: 1px solid #d5d3d4; border-right-color: #777; border-bottom-color: #666; font: bold 7.500px/10px "Liberation Sans"; text-align: center; color: #2c2a2c; }
.btn svg { position: absolute; right: 2px; top: 2px; }
.wf { margin-top: 3px; padding-right: 6px; width: 65px; height: 13px; }
.auto { display: flex; gap: 3px; margin-top: 2px; }
.auto .btn { width: 23px; height: 12px; }
.auto .read { width: 39px; color: #37863a; padding-right: 6px; }
.base { display: flex; margin-top: 3px; height: 12px; background: #787174; align-items: center; width: 65px; }
.base i { width: 9px; height: 12px; border: 1px solid #aaa; background: radial-gradient(circle, #ddd 0 1px, #3659b0 1.500px 3px, #c6cadc 3.500px); margin-right: 4px; }
.meter { width: 14px; background: #3d282c; padding: 0 4px 0 2px; }
.meter i { display: block; height: 346px; background: linear-gradient(#250a05 4px, #4d3006 4px 47px, #6c6610 47px 175px, #2f5f0c 175px); }
.slot { width: 60px; padding: 2px 2px 0 3px; border-right: 1px solid #24181a; display: flex; flex-direction: column; gap: 1.300px; }
.plug, .empty { height: 13px; flex: none; font: bold 7.500px/13px "Liberation Sans"; text-align: center; position: relative; padding-left: 8px; overflow: hidden; }
.plug { background: linear-gradient(#d7d5d6, #b0aeaf); border-radius: 1px; box-shadow: inset 8px 0 #b4b2b3, inset 9px 0 #777; }
.empty { background: #46292f; }
.plug::before, .empty::before { content: ""; position: absolute; left: 3px; top: 4px; width: 3px; height: 3px; background: #666164; }
.empty::before { background: #24191c; }
.iocol { width: 67px; padding: 2px 3px 0; border: 0; gap: 1.500px; }
.iocol .btn { padding-right: 6px; flex: none; height: 13px; line-height: 12px; }
.vol { height: 12px; margin-top: 5px; background: #081307; border: 1px solid #222; color: #95e54b; font-size: 7.500px; line-height: 11px; display: flex; justify-content: space-between; padding: 0 3px; }
.wave { width: 780px; height: 347px; }
.clipname { font: bold 7.500px "Liberation Sans"; fill: #eef2f4; }
.trackscroll { width: 12px; background: #aba7ab; }
.trackscroll i { display: block; height: 15px; border: 1px solid #858385; border-top-color: #ccc; background: #989698; padding-top: 1px; }
.void { display: flex; height: 155px; }
.void-left { width: 356px; background: #3a3a3a; border-right: 1px solid #292929; }
.void-right { width: 780px; background: repeating-linear-gradient(90deg, #83867f 0 15px, #80837d 15px 30px); }
.vz { width: 12px; background: #aba7ab; display: flex; flex-direction: column; justify-content: flex-end; }
.vz i, .vz b { height: 12px; border: 1px solid #858385; background: #a3a1a3; font-size: 10px; line-height: 10px; text-align: center; }
.vz i { height: 13px; border-width: 1px 0 0; }
.vz b { background: #b9b7b9; border-top-color: #ddd; }
.bottom { display: flex; height: 12px; }
.b-left { width: 355px; background: #474747; display: flex; align-items: center; padding-left: 2px; }
.b-scroll { width: 719px; background: #aeaaae; padding-left: 4px; }
.b-scroll i { display: block; width: 6px; height: 12px; background: linear-gradient(90deg, #888, #555); }
.zoombtns { display: flex; width: 74px; }
.zoombtns i { width: 12px; height: 11px; background: #aaa8a6; border: 1px solid #777; font: bold 10px/9px "Liberation Sans"; display: flex; align-items: center; justify-content: center; }
.zoombtns .dk { background: #575759; width: 13px; }
.zoombtns svg:last-child { margin: 1px 0 0 3px; }
.playhead { position: absolute; left: 662px; top: 14px; width: 1px; height: 28px; background: #c1505c; }
.grip { position: absolute; right: 1px; bottom: 1px; }

.dock { height: 50px; position: relative; background: linear-gradient(90deg, #080311 0, #0f0620 4%, #180724 25%, #220a2d 45%, #1a0730 60%, #080415 80%, #040208 100%); }
.shelf { position: absolute; left: 15px; top: 22px; width: 1250px; height: 27px; clip-path: polygon(20px 0, 1228px 0, 1250px 25px, 1250px 27px, 0 27px, 0 25px); background: linear-gradient(#706b77 0, #7b7780 15px, #94919a 18px, #8a8790 24px, #f0f0f2 25px); }
.icons { position: relative; display: flex; padding: 7px 0 0 31px; }
.icons svg { width: 31.700px; height: 32px; }
.sep { width: 16px; height: 32px; background: repeating-linear-gradient(transparent 0 3px, #96939b 3px 5px); clip-path: polygon(4px 45%, 12px 45%, 14px 100%, 2px 100%); }
.cal { font: bold 12px "Liberation Sans"; fill: #161617; }
.us { font: bold 5.600px "Liberation Sans"; fill: #f2f2f2; }
.us2 { font: 3.500px "Liberation Sans"; fill: #bbb; }
.skype { font: bold 22px "Liberation Sans"; fill: #fff; }
```

FILE: app.js
```js
// Track list: name, colour, kind (a audio, x aux, i instrument, m master), italic flag
const T = '#1f625c', N = '#173e5e', G = '#3c5f1f', R = '#c8102e', C = '#67dcf4', O = '#93591f';
const tracks = [
  ['worktape', T, 'a', 1], ['EZD', T, 'i', 1], ['Kick', N, 'a'], ['Snare T', N, 'a'], ['Snare B', N, 'a'], ['HH', N, 'a'],
  ['Tom1', N, 'a'], ['Tom2', N, 'a'], ['Tom3', N, 'a'], ['OH', N, 'a'], ['Room', N, 'a'], ['CompRoom', N, 'a'],
  ['Drums', G, 'x'], ['Bass', '#5e0d18', 'a'], ['B/K', G, 'x'], ['VOX', '#e7e245', 'a'], ['Acoustic1.01', '#3416ef', 'a'],
  ['Acoustic2', '#3416ef', 'a'], ['AG', G, 'x'], ['Electric1', N, 'a'], ['Electric2', '#16294f', 'a'], ['Electric3', '#16294f', 'a'],
  ['Gtr Delay', G, 'x'], ['Shaker', C, 'a'], ['Tamb', C, 'a'], ['Color', C, 'a'], ['B3', O, 'i'], ['Xpand', O, 'i', 1],
  ['BGV1', T, 'a', 1], ['BGV2', T, 'a', 1], ['BGV3', T, 'a', 1], ['BGVs', '#2b4b23', 'x', 1], ['Reverb', '#39a33b', 'x'],
  ['Submaster', R, 'm'], ['Submix', '#39a33b', 'x'], ['Master 1', R, 'm'], ["WhnthFD'B_FM", T, 'a']
];
const icons = {
  a: '<path d="M0 4h8M2 1v6M4 2.500v3" stroke="#514b4c" stroke-width="1.200"/>',
  x: '<path d="M3 0h2v4h3L4 8 0 4h3z" fill="#2d7e35"/>',
  i: '<rect x=".5" y=".5" width="7" height="7" fill="#a4672a" stroke="#5e3a16"/><path d="M2 5h4M2 2h4v3" stroke="#3d2611" fill="none"/>',
  m: '<path d="M0 0h8v2H6L5 4l1 2h2v2H0V6h2l1-2-1-2H0z" fill="#84212b"/>'
};
document.getElementById('tracks').innerHTML = tracks.map(([n, c, k, it]) =>
  `<div class="tr${it ? ' it' : ''}${n === 'Bass' ? ' sel' : ''}"><u></u><s style="background:${c}"></s><svg width="8" height="8">${icons[k]}</svg><em>${n}</em></div>`).join('');

document.getElementById('beats').innerHTML =
  ['9|3', '9|4', '10|1', '10|2', '10|3', '10|4', '11|1', '11|2', '11|3', '11|4', '12|1', '12|2', '12|3'].map(b => `<b>${b}</b>`).join('');

let lines = '';
for (let x = 494.6; x < 1260; x += 14.737) {
  lines += `<path d="M${x.toFixed(2)} 151v347" stroke="${x < 870 ? '#96c4de' : '#4b5358'}" stroke-width="1"/>`;
}
document.getElementById('gridlines').innerHTML = lines;

// Each note: upper envelope, lower envelope, stripe spacing and depth
const notes = [
  { up: [[32,305],[36,240],[41,160],[45,210],[48,195],[54,225],[90,230],[150,228],[220,235],[310,243],[362,258],[368,290],[376,300],[380,290],[384,303]],
    dn: [[32,318],[37,400],[42,495],[55,470],[80,450],[150,425],[240,400],[310,380],[362,372],[370,345],[376,320],[380,334],[384,320]], step: 7, top: 4, bot: 10 },
  { up: [[384,303],[388,295],[392,220],[398,55],[408,95],[430,128],[450,135],[500,138],[560,152],[566,210],[573,300]],
    dn: [[384,320],[390,325],[394,430],[401,560],[415,530],[450,500],[520,455],[562,435],[570,335],[573,320]], step: 8.5, top: 55, bot: 75, wide: 3 },
  { up: [[573,300],[578,240],[583,103],[600,140],[640,170],[690,195],[738,215],[745,280],[750,300]],
    dn: [[573,320],[580,420],[588,515],[605,500],[640,480],[700,455],[720,425],[738,395],[745,335],[750,320]], step: 9, top: 16, bot: 26 },
  { up: [[750,300],[757,180],[761,133],[768,153],[830,162],[960,180],[1040,198],[1092,208],[1098,260],[1104,303]],
    dn: [[750,320],[757,400],[765,440],[800,418],[870,398],[960,382],[1040,385],[1094,388],[1099,350],[1104,320]], step: 10.5, top: 62, bot: 18, wide: 3 },
  { up: [[1104,303],[1110,200],[1115,140],[1122,157],[1198,165]],
    dn: [[1104,320],[1110,400],[1118,450],[1150,425],[1198,408]], step: 12, top: 70, bot: 26, wide: 3 }
];
const at = (p, x) => {
  for (let i = 1; i < p.length; i++) {
    if (x <= p[i][0]) {
      const [a, b] = p[i - 1], [c, d] = p[i];
      return b + (d - b) * (x - a) / (c - a);
    }
  }
  return p[p.length - 1][1];
};
let out = '';
notes.forEach(n => {
  const pts = n.up.concat([...n.dn].reverse()).map(p => p.join(' ')).join('L');
  out += `<path d="M${pts}z" fill="#86bfe0" stroke="#b6cbd6" stroke-width="1.500"/>`;
  const x0 = n.up[0][0] + 26, x1 = n.up[n.up.length - 1][0] - 12, w = n.wide || 2;
  let k = 0;
  for (let x = x0; x < x1; x += n.step, k++) {
    const v = .6 + .4 * Math.abs(Math.sin(k * 1.700));
    const u = at(n.up, x), d = at(n.dn, x), tu = n.top * v, td = n.bot * v;
    out += `<path d="M${x - w} ${u - 3}L${x} ${u + tu}L${x + w} ${u - 3}zM${x - w} ${d + 3}L${x} ${d - td}L${x + w} ${d + 3}z" fill="#48606e"/>`;
    if (n.top > 12) {
      out += `<path d="M${x + n.step / 2} ${u + 2}v${tu * 1.900}M${x + n.step / 2} ${d - 2}v${-td * 1.400}" stroke="#c4e1f2" stroke-width="2"/>`;
    }
  }
});
document.getElementById('bright').innerHTML = out;
```
